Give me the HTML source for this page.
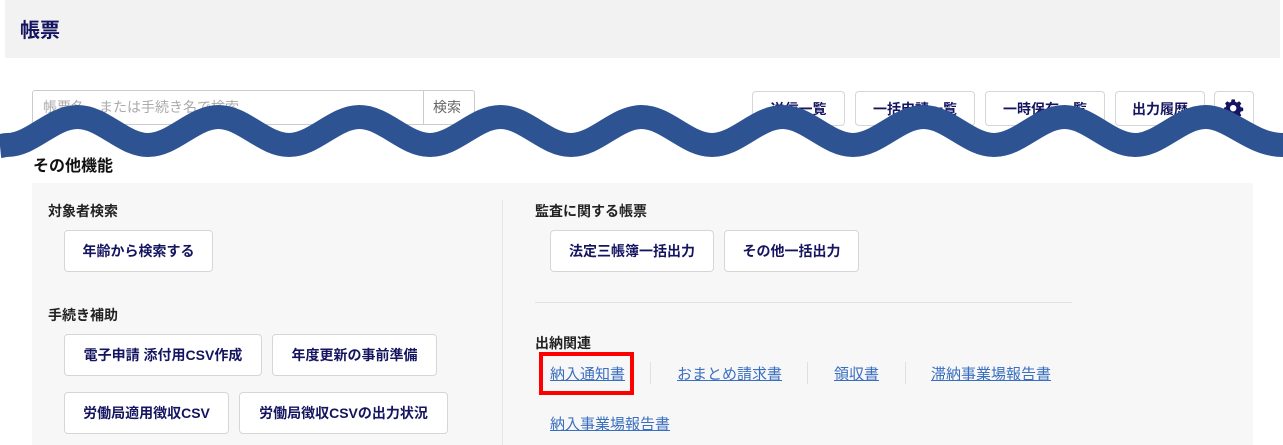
<!DOCTYPE html>
<html><head><meta charset="utf-8"><style>
*{box-sizing:border-box;margin:0;padding:0}
body{width:1283px;height:445px;overflow:hidden;background:#fff;font-family:"Liberation Sans","Noto Sans CJK JP",sans-serif;position:relative}
.a{position:absolute}
.hdr{left:5px;top:0;width:1275px;height:58px;background:#f2f2f2}
.ttl{left:20px;top:14px;font-size:20px;font-weight:bold;color:#141460}
.btn{position:absolute;border:1px solid #d6d6d6;border-radius:4px;background:#fff;color:#141460;font-weight:bold;font-size:14px;display:flex;align-items:center;justify-content:center}
.h{position:absolute;font-weight:bold;font-size:14px;color:#222}
.lk{position:absolute;font-size:15px;color:#3a6fc0;text-decoration:underline;top:363px}
.sep{position:absolute;width:1px;height:22px;background:#e0e0e0;top:362px}
</style></head><body>
<div class="a hdr"></div>
<div class="a ttl">帳票</div>
<div class="a" style="left:32px;top:90px;width:443px;height:35px;border:1px solid #ccc;border-radius:3px;background:#fff"></div>
<div class="a" style="left:43px;top:97px;font-size:14px;color:#aaa">帳票名、または手続き名で検索</div>
<div class="a" style="left:423px;top:90px;width:1px;height:35px;background:#ccc"></div>
<div class="a" style="left:433px;top:97px;font-size:14px;color:#666">検索</div>
<div class="btn" style="left:752px;top:91px;width:93px;height:35px">送信一覧</div>
<div class="btn" style="left:855px;top:91px;width:120px;height:35px">一括申請一覧</div>
<div class="btn" style="left:985px;top:91px;width:120px;height:35px">一時保存一覧</div>
<div class="btn" style="left:1115px;top:91px;width:90px;height:35px">出力履歴</div>
<div class="btn" style="left:1214px;top:91px;width:40px;height:35px"><svg width="20" height="20" viewBox="0 0 24 24"><path fill="#141460" d="M10 1h4l.6 3 2.2 1 2.6-1.7 2.8 2.8L20.5 8.7l1 2.2 3 .6v4l-3 .6-1 2.2 1.7 2.6-2.8 2.8-2.6-1.7-2.2 1-.6 3h-4l-.6-3-2.2-1-2.6 1.7-2.8-2.8 1.7-2.6-1-2.2-3-.6v-4l3-.6 1-2.2L1.8 6.1l2.8-2.8 2.6 1.7 2.2-1zM12 8a4 4 0 100 8 4 4 0 000-8z" transform="translate(-0.5 -0.5) scale(0.96)"/></svg></div>
<div class="a" style="left:33px;top:152px;font-size:16px;font-weight:bold;color:#111">その他機能</div>
<div class="a" style="left:32px;top:183px;width:1221px;height:262px;background:#f7f7f7"></div>
<div class="a" style="left:502px;top:200px;width:1px;height:245px;background:#e6e6e6"></div>
<div class="h" style="left:48px;top:201px">対象者検索</div>
<div class="btn" style="left:64px;top:230px;width:149px;height:42px">年齢から検索する</div>
<div class="h" style="left:48px;top:305px">手続き補助</div>
<div class="btn" style="left:64px;top:334px;width:198px;height:42px">電子申請 添付用CSV作成</div>
<div class="btn" style="left:272px;top:334px;width:165px;height:42px">年度更新の事前準備</div>
<div class="btn" style="left:64px;top:392px;width:165px;height:42px">労働局適用徴収CSV</div>
<div class="btn" style="left:239px;top:392px;width:209px;height:42px">労働局徴収CSVの出力状況</div>
<div class="h" style="left:535px;top:201px">監査に関する帳票</div>
<div class="btn" style="left:550px;top:230px;width:164px;height:42px">法定三帳簿一括出力</div>
<div class="btn" style="left:724px;top:230px;width:135px;height:42px">その他一括出力</div>
<div class="a" style="left:535px;top:302px;width:537px;height:1px;background:#e2e2e2"></div>
<div class="h" style="left:535px;top:333px">出納関連</div>
<div class="a" style="left:539px;top:352px;width:95px;height:43px;border:4px solid #f00"></div>
<div class="lk" style="left:550px">納入通知書</div>
<div class="sep" style="left:650px"></div>
<div class="lk" style="left:677px">おまとめ請求書</div>
<div class="sep" style="left:807px"></div>
<div class="lk" style="left:834px">領収書</div>
<div class="sep" style="left:905px"></div>
<div class="lk" style="left:931px">滞納事業場報告書</div>
<div class="lk" style="left:550px;top:413px">納入事業場報告書</div>
<svg class="a" style="left:0;top:0" width="1283" height="445"><path fill="none" stroke="#2d5393" stroke-width="24" d="M0 146 C5 145.5 3 145 7 145 C32 145 52 117 77.5 117 S123 145 148 145 S193.5 117 218.5 117 S264 145 289 145 S334.5 117 359.5 117 S405 145 430 145 S475.5 117 500.5 117 S546 145 571 145 S616.5 117 641.5 117 S687 145 712 145 S757.5 117 782.5 117 S828 145 853 145 S898.5 117 923.5 117 S969 145 994 145 S1039.5 117 1064.5 117 S1110 145 1135 145 S1180.5 117 1205.5 117 S1251 145 1283 145"/></svg>
</body></html>
